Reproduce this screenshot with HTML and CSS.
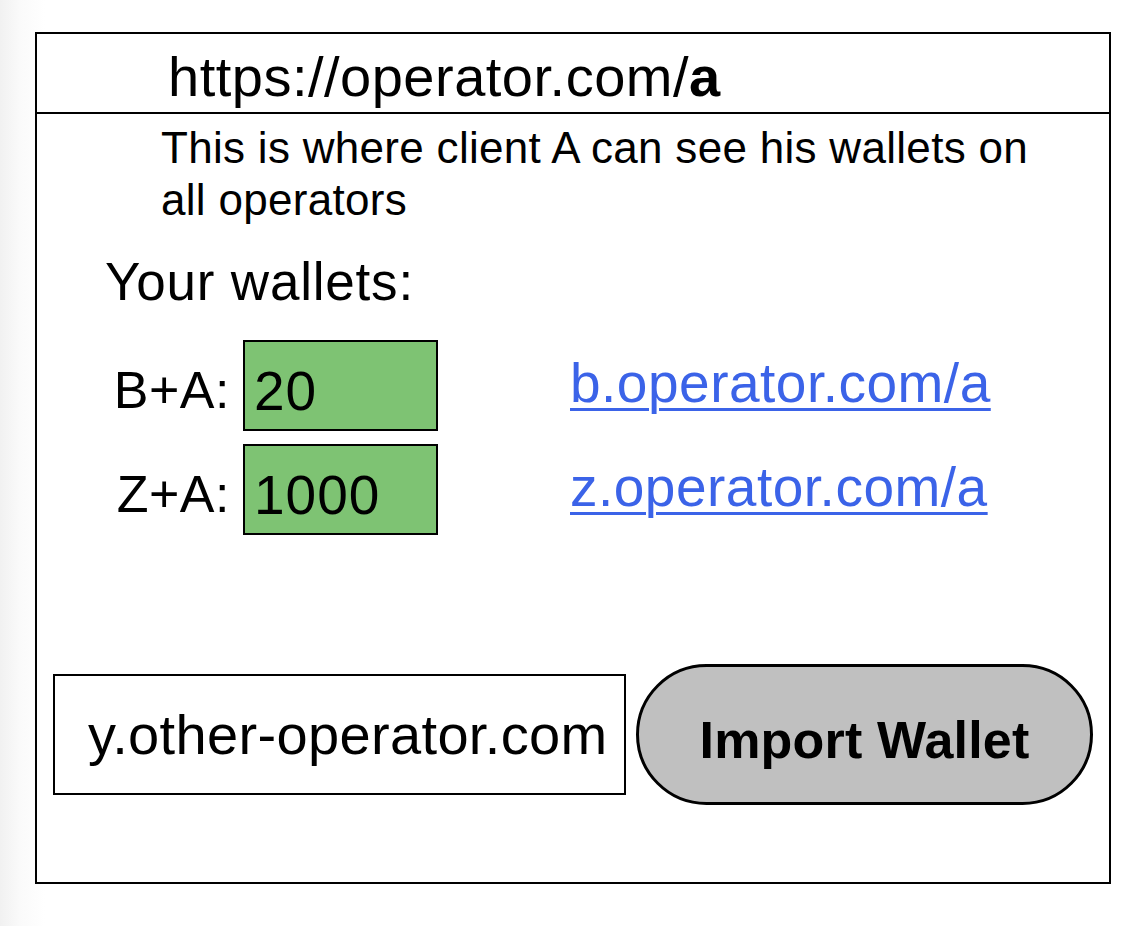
FILE: index.html
```html
<!DOCTYPE html>
<html lang="en">
<head>
<meta charset="utf-8">
<title>operator.com/a</title>
<link rel="stylesheet" href="styles.css">
</head>
<body>
  <div class="frame">
    <div class="urlbar">https://operator.com/<b>a</b></div>
    <p class="desc">This is where client A can see his wallets on all operators</p>
    <h2 class="title">Your wallets:</h2>
    <div class="wallets">
      <div class="wallet-row">
        <span class="label">B+A:</span>
        <span class="amount">20</span>
        <a class="link" href="#">b.operator.com/a</a>
      </div>
      <div class="wallet-row">
        <span class="label">Z+A:</span>
        <span class="amount">1000</span>
        <a class="link" href="#">z.operator.com/a</a>
      </div>
    </div>
    <div class="import-row">
      <div class="import-input">y.other-operator.com</div>
      <button class="import-btn">Import Wallet</button>
    </div>
  </div>
</body>
</html>
```
FILE: styles.css
```css
html {
  min-height: 100%;
}
body {
  margin: 0;
  min-height: 926px;
  background: linear-gradient(to right, #f1f1f1 0, #fafafa 20px, #ffffff 45px);
  font-family: "Liberation Sans", Arial, sans-serif;
  color: #000;
}
.frame {
  box-sizing: border-box;
  margin: 32px 0 0 35px;
  width: 1076px;
  height: 852px;
  border: 2px solid #000;
  background: #fff;
  display: flex;
  flex-direction: column;
}
.urlbar {
  box-sizing: border-box;
  height: 80px;
  border-bottom: 2px solid #000;
  padding: 12px 0 0 131px;
  font-size: 56px;
  line-height: 62px;
  letter-spacing: 0.5px;
}
.urlbar b {
  font-weight: 700;
}
.desc {
  margin: 8px 0 0 124px;
  max-width: 900px;
  font-size: 44px;
  line-height: 52px;
  letter-spacing: 0.3px;
}
.title {
  margin: 25px 0 0 68px;
  font-size: 53px;
  line-height: 61px;
  font-weight: 400;
  letter-spacing: 0.8px;
}
.wallets {
  margin-top: 28px;
  display: flex;
  flex-direction: column;
  gap: 13px;
}
.wallet-row {
  display: grid;
  grid-template-columns: 193px 195px auto;
  column-gap: 13px;
  align-items: start;
  height: 91px;
}
.label {
  margin-top: 20px;
  text-align: right;
  font-size: 52px;
  line-height: 60px;
  letter-spacing: 0.5px;
}
.amount {
  box-sizing: border-box;
  height: 91px;
  border: 2px solid #000;
  background: #7ec373;
  padding: 19px 0 0 9px;
  font-size: 55px;
  line-height: 60px;
  letter-spacing: 1px;
}
.link {
  margin: 13px 0 0 119px;
  font-size: 55px;
  line-height: 60px;
  letter-spacing: 0.5px;
  color: #3b63e8;
  text-decoration: underline;
  text-decoration-thickness: 3px;
  text-underline-offset: 6px;
}
.import-row {
  margin: 129px 0 0 16px;
  display: flex;
  align-items: center;
  gap: 10px;
}
.import-input {
  box-sizing: border-box;
  width: 573px;
  height: 121px;
  border: 2px solid #000;
  padding-left: 33px;
  display: flex;
  align-items: center;
  font-size: 56px;
  line-height: 62px;
  letter-spacing: 0.35px;
}
.import-btn {
  box-sizing: border-box;
  width: 457px;
  height: 141px;
  border: 3px solid #000;
  border-radius: 71px;
  background: #c0c0c0;
  padding: 11px 0 0 0;
  font-family: "Liberation Sans", Arial, sans-serif;
  font-size: 52px;
  font-weight: 700;
  letter-spacing: 0.2px;
  color: #000;
}
```
